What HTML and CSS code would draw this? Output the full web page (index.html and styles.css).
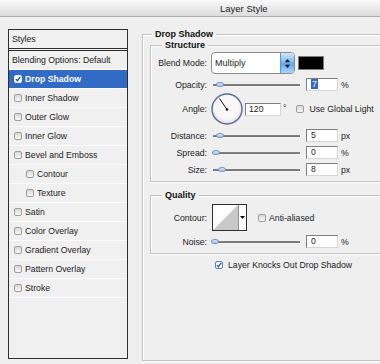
FILE: index.html
```html
<!DOCTYPE html>
<html lang="en">

<head>
  <meta charset="UTF-8">
  <meta name="viewport" content="width=device-width, initial-scale=1.0">
  <title>Layer Style</title>
  <link rel="stylesheet" href="styles.css">
</head>

<body>
  <div class="titlebar"><span class="title">Layer Style</span></div>

  <div class="dialog">
    <!-- style list on the left -->
    <div class="styles-list">
      <div class="list-head">Styles</div>
      <div class="item plain">Blending Options: Default</div>
      <div class="item selected">
        <span class="check on">
          <svg width="8" height="8" viewBox="0 0 8 8"><path d="M1.2 4.2 L3.2 6.4 L7 1.2" fill="none" stroke="#1c3f8a" stroke-width="1.8"/></svg>
        </span>Drop Shadow
      </div>
      <div class="item"><span class="check"></span>Inner Shadow</div>
      <div class="item"><span class="check"></span>Outer Glow</div>
      <div class="item"><span class="check"></span>Inner Glow</div>
      <div class="item"><span class="check"></span>Bevel and Emboss</div>
      <div class="item sub"><span class="check"></span>Contour</div>
      <div class="item sub"><span class="check"></span>Texture</div>
      <div class="item"><span class="check"></span>Satin</div>
      <div class="item"><span class="check"></span>Color Overlay</div>
      <div class="item"><span class="check"></span>Gradient Overlay</div>
      <div class="item"><span class="check"></span>Pattern Overlay</div>
      <div class="item"><span class="check"></span>Stroke</div>
    </div>

    <fieldset class="group outer">
      <legend>Drop Shadow</legend>

      <fieldset class="group structure">
        <legend>Structure</legend>

        <div class="row blend-row">
          <span class="lbl">Blend Mode:</span>
          <div class="select">
            <span class="select-text">Multiply</span>
            <span class="select-btn">
              <svg width="7" height="11" viewBox="0 0 7 11"><path d="M3.5 1 L6 4.2 L1 4.2 Z M3.5 10 L6 6.8 L1 6.8 Z" fill="#111"/></svg>
            </span>
          </div>
          <span class="swatch"></span>
        </div>

        <div class="row">
          <span class="lbl">Opacity:</span>
          <div class="slider"><span class="thumb" style="left: 3px"></span></div>
          <span class="field"><span class="hilite">7</span></span>
          <span class="unit">%</span>
        </div>

        <div class="row angle-row">
          <span class="lbl">Angle:</span>
          <svg class="dial" width="32" height="32" viewBox="0 0 32 32">
            <defs>
              <radialGradient id="dialFill" cx="50%" cy="45%" r="55%">
                <stop offset="0.7" stop-color="#f8f8f8"/>
                <stop offset="1" stop-color="#dcdcdc"/>
              </radialGradient>
            </defs>
            <circle cx="16" cy="16" r="15" fill="url(#dialFill)" stroke="#5a6b94" stroke-width="1.4"/>
            <line x1="16" y1="16.5" x2="8.5" y2="5.5" stroke="#111" stroke-width="1"/>
            <circle cx="16" cy="16.5" r="1.3" fill="#111"/>
          </svg>
          <span class="field wide">120</span>
          <span class="unit deg">°</span>
          <span class="check global"></span>
          <span class="check-label">Use Global Light</span>
        </div>

        <div class="row">
          <span class="lbl">Distance:</span>
          <div class="slider"><span class="thumb" style="left: 3px"></span></div>
          <span class="field">5</span>
          <span class="unit">px</span>
        </div>

        <div class="row">
          <span class="lbl">Spread:</span>
          <div class="slider"><span class="thumb" style="left: -1px"></span></div>
          <span class="field">0</span>
          <span class="unit">%</span>
        </div>

        <div class="row">
          <span class="lbl">Size:</span>
          <div class="slider"><span class="thumb" style="left: 5px"></span></div>
          <span class="field">8</span>
          <span class="unit">px</span>
        </div>
      </fieldset>

      <fieldset class="group quality">
        <legend>Quality</legend>

        <div class="row contour-row">
          <span class="lbl">Contour:</span>
          <div class="contour">
            <svg width="25" height="25" viewBox="0 0 25 25"><path d="M0 25 L25 0 L25 25 Z" fill="#c9c9c9"/></svg>
            <span class="contour-btn">
              <svg width="5" height="3" viewBox="0 0 5 3"><path d="M0 0 L5 0 L2.5 3 Z" fill="#111"/></svg>
            </span>
          </div>
          <span class="check anti"></span>
          <span class="check-label">Anti-aliased</span>
        </div>

        <div class="row">
          <span class="lbl">Noise:</span>
          <div class="slider"><span class="thumb" style="left: -2px"></span></div>
          <span class="field">0</span>
          <span class="unit">%</span>
        </div>
      </fieldset>

      <div class="knock">
        <span class="check on blue">
          <svg width="8" height="8" viewBox="0 0 8 8"><path d="M1.2 4.2 L3.2 6.4 L7 1.2" fill="none" stroke="#2a55a8" stroke-width="1.8"/></svg>
        </span>
        <span class="check-label">Layer Knocks Out Drop Shadow</span>
      </div>
    </fieldset>
  </div>
</body>

</html>
```

FILE: styles.css
```css
html,
body {
  margin: 0;
  padding: 0;
}

body {
  width: 380px;
  height: 364px;
  overflow: hidden;
  background: #efefef;
  color: #1c1c1c;
  font-family: "Liberation Sans", Arial, sans-serif;
  font-size: 8.7px;
}

/* window title */
.titlebar {
  height: 16px;
  border-bottom: 1px solid #a9a9a9;
  background: linear-gradient(#fafafa, #dcdcdc);
  display: flex;
  align-items: center;
  padding-left: 220px;
}

.title {
  font-size: 9.5px;
  color: #222;
}

.dialog {
  display: flex;
  align-items: flex-start;
  padding: 12px 0 0 8px;
}

/* styles list */
.styles-list {
  flex: none;
  width: 120px;
  height: 330px;
  box-sizing: border-box;
  border: 1px solid #2e2e2e;
  background: #f0f0f0;
}

.list-head {
  height: 18px;
  line-height: 18px;
  padding-left: 3px;
  border-bottom: 3px double #2e2e2e;
}

.item {
  height: 18px;
  display: flex;
  align-items: center;
  padding-left: 5px;
  border-bottom: 1px solid #fbfbfb;
}

.item.plain {
  padding-left: 3px;
}

.item.sub {
  padding-left: 17px;
}

.item.selected {
  background: #326bc3;
  color: #fff;
  font-weight: bold;
}

.check {
  flex: none;
  width: 8px;
  height: 8px;
  box-sizing: border-box;
  border: 1px solid #9d9d9d;
  border-radius: 2px;
  background: linear-gradient(#d9d9d9, #f7f7f7);
  margin-right: 3px;
  display: flex;
  align-items: center;
  justify-content: center;
}

.check svg {
  display: block;
}

.check.on {
  background: #fff;
  border-color: #e8eef8;
}

.check.blue {
  border-color: #5b7fc0;
}

.check-label {
  white-space: nowrap;
}

/* group boxes */
.group {
  margin: 0;
  padding: 0;
  min-width: 0;
  border: 1px solid #c2c2c2;
  box-shadow: inset 1px 1px 0 #fff, 1px 1px 0 #fff;
}

.group legend {
  margin-left: 10px;
  padding: 0 3px;
  line-height: 11px;
  font-size: 9px;
  font-weight: bold;
  color: #111;
  background: #efefef;
}

.outer {
  flex: none;
  width: 250px;
  margin-left: 14px;
  padding-bottom: 90px;
}

.outer > legend {
  margin-left: 9px;
}

.structure {
  margin-left: 7px;
  width: 240px;
  padding: 1px 0 5px;
}

.structure > legend,
.quality > legend {
  margin-left: 11px;
}

.quality {
  margin: 8px 0 0 7px;
  width: 240px;
  padding: 3px 0 5px;
}

/* rows */
.row {
  display: flex;
  align-items: center;
  height: 13px;
  margin-top: 4px;
  white-space: nowrap;
}

.row:first-of-type {
  margin-top: 0;
}

.lbl {
  flex: none;
  width: 56px;
  margin-right: 4px;
  text-align: right;
}

.blend-row {
  height: 22px;
}

.angle-row {
  height: 32px;
  margin-top: 2px;
}

.contour-row {
  height: 27px;
}

.select {
  flex: none;
  width: 84px;
  height: 22px;
  box-sizing: border-box;
  border: 1px solid #8c8c8c;
  border-radius: 4px;
  background: #fff;
  display: flex;
  overflow: hidden;
}

.select-text {
  flex: 1;
  align-self: center;
  padding-left: 3px;
  font-size: 9px;
}

.select-btn {
  width: 13px;
  border-left: 1px solid #6d90c2;
  background: linear-gradient(#cfe7fc, #7fbaf2 45%, #5ea7ee 55%, #a8d6fb);
  display: flex;
  align-items: center;
  justify-content: center;
}

.swatch {
  flex: none;
  width: 26px;
  height: 14px;
  box-sizing: border-box;
  margin-left: 3px;
  background: #000;
  border: 1px solid #7c7c7c;
}

.slider {
  flex: none;
  position: relative;
  width: 87px;
  height: 13px;
  margin-left: 2px;
  background: linear-gradient(to bottom, transparent 6px, #8a8a8a 6px, #6a6a6a 8px, #f8f8f8 8px, #f8f8f8 9px, transparent 9px);
}

.thumb {
  position: absolute;
  top: 4px;
  width: 8px;
  height: 5px;
  box-sizing: border-box;
  border: 1px solid #7592c4;
  border-radius: 50%;
  background: linear-gradient(#e4eefa, #9dbde6);
}

.field {
  flex: none;
  width: 32px;
  height: 13px;
  box-sizing: border-box;
  margin-left: 6px;
  padding-left: 4px;
  line-height: 11px;
  background: #fff;
  border: 1px solid #7e7e7e;
  border-right-color: #d6d6d6;
  border-bottom-color: #d6d6d6;
}

.field.wide {
  width: 36px;
  margin-left: 2px;
  padding-left: 3px;
}

.hilite {
  background: #316ac5;
  color: #fff;
  padding: 0 1px;
}

.unit {
  margin-left: 3px;
}

.deg {
  margin-left: 2px;
  margin-right: 10px;
  align-self: flex-start;
  margin-top: 10px;
}

.global {
  margin-right: 5px;
}

.anti {
  margin-left: 11px;
  margin-right: 3px;
}

.dial {
  flex: none;
  display: block;
}

.contour {
  flex: none;
  width: 35px;
  height: 27px;
  box-sizing: border-box;
  margin-left: 1px;
  border: 1px solid #2f2f2f;
  background: #fff;
  display: flex;
}

.contour svg {
  display: block;
}

.contour-btn {
  flex: 1;
  border-left: 1px solid #8e8e8e;
  display: flex;
  align-items: center;
  justify-content: center;
}

.knock {
  display: flex;
  align-items: center;
  margin: 5px 0 0 72px;
  height: 11px;
}

.knock .check {
  margin-right: 5px;
}
```
